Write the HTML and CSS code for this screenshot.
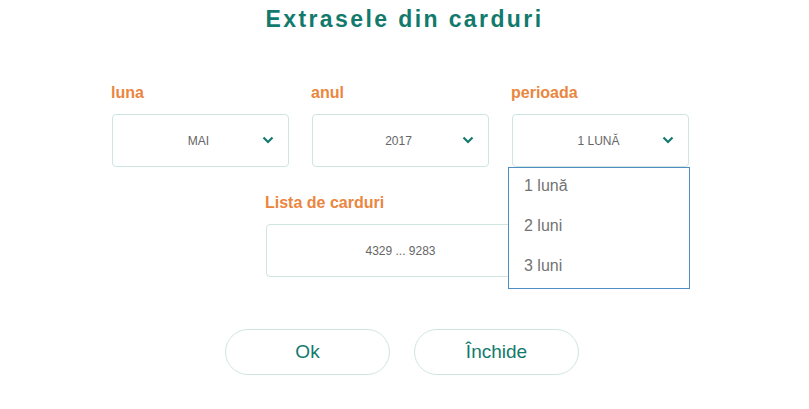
FILE: index.html
```html
<!DOCTYPE html>
<html lang="ro">
<head>
    <meta charset="UTF-8">
    <meta name="viewport" content="width=device-width, initial-scale=1.0">
    <title>Extrasele din carduri</title>
    <link rel="stylesheet" href="styles.css">
</head>
<body>
    <div id="statements">
        <h1 class="title">Extrasele din carduri</h1>

        <div class="row">
            <div class="field">
                <label class="field-label">luna</label>
                <div class="select">
                    <span class="select-value">Mai</span>
                    <svg class="chevron" width="12" height="8" viewBox="0 0 12 8"><path d="M1.5 1.5 L6 6 L10.5 1.5" fill="none" stroke="#147a6e" stroke-width="2.2"/></svg>
                </div>
            </div>
            <div class="field">
                <label class="field-label">anul</label>
                <div class="select">
                    <span class="select-value">2017</span>
                    <svg class="chevron" width="12" height="8" viewBox="0 0 12 8"><path d="M1.5 1.5 L6 6 L10.5 1.5" fill="none" stroke="#147a6e" stroke-width="2.2"/></svg>
                </div>
            </div>
            <div class="field">
                <label class="field-label">perioada</label>
                <div class="select open">
                    <span class="select-value">1 lună</span>
                    <svg class="chevron" width="12" height="8" viewBox="0 0 12 8"><path d="M1.5 1.5 L6 6 L10.5 1.5" fill="none" stroke="#147a6e" stroke-width="2.2"/></svg>
                    <ul class="options">
                        <li>1 lună</li>
                        <li>2 luni</li>
                        <li>3 luni</li>
                    </ul>
                </div>
            </div>
        </div>

        <div class="row row-cards">
            <div class="field field-wide">
                <label class="field-label">Lista de carduri</label>
                <div class="select">
                    <span class="select-value">4329 ... 9283</span>
                </div>
            </div>
        </div>

        <div class="actions">
            <button class="btn">Ok</button>
            <button class="btn">Închide</button>
        </div>
    </div>
</body>
</html>
```

FILE: styles.css
```css
body {
    margin: 0;
    background-color: #ffffff;
    font-family: "Liberation Sans", Arial, sans-serif;
}
#statements {
    width: 809px;
}
.title {
    margin: 0;
    padding-top: 6px;
    height: 32px;
    text-align: center;
    font-size: 23px;
    font-weight: bold;
    letter-spacing: 2.4px;
    color: #127a6d;
}
.row {
    display: flex;
    gap: 23px;
    padding-left: 112px;
    margin-top: 45px;
}
.row-cards {
    padding-left: 266px;
    margin-top: 26px;
}
.field {
    display: flex;
    flex-direction: column;
    width: 177px;
}
.field-wide {
    width: 269px;
}
.field-label {
    margin-left: -1px;
    height: 20px;
    line-height: 20px;
    font-size: 16px;
    font-weight: bold;
    color: #ea8640;
    margin-bottom: 11px;
}
.select {
    position: relative;
    display: flex;
    align-items: center;
    justify-content: center;
    height: 51px;
    border: 1px solid #cfe5e2;
    border-radius: 4px;
}
.select-value {
    margin-left: -4px;
    font-size: 12px;
    text-transform: uppercase;
    color: #666666;
}
.row-cards .select-value {
    margin-left: 0;
    text-transform: none;
}
.chevron {
    position: absolute;
    right: 14px;
    top: 21px;
}
.options {
    position: absolute;
    top: 52px;
    left: -5px;
    width: 180px;
    margin: 0;
    padding: 0;
    list-style: none;
    background-color: #ffffff;
    border: 1px solid #4f8ec4;
    z-index: 2;
}
.options li {
    height: 36px;
    line-height: 36px;
    padding: 0 0 4px 15px;
    font-size: 16px;
    color: #737373;
}
.actions {
    display: flex;
    justify-content: center;
    gap: 24px;
    margin-top: 52px;
    padding-right: 5px;
}
.btn {
    width: 165px;
    height: 46px;
    border: 1px solid #cfe5e2;
    border-radius: 23px;
    background-color: #ffffff;
    font-family: "Liberation Sans", Arial, sans-serif;
    font-size: 19px;
    color: #127a6d;
}
```
